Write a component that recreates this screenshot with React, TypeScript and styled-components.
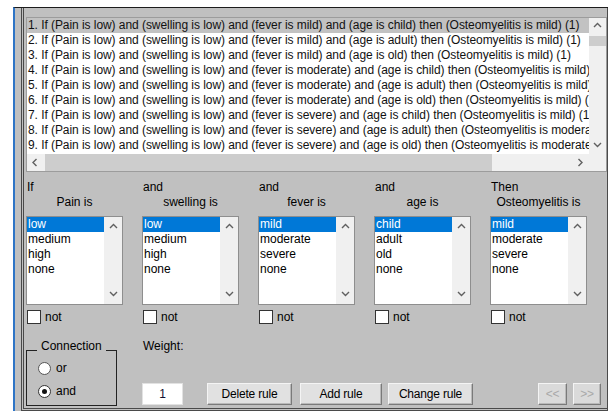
import React from "react";
import styled, { createGlobalStyle } from "styled-components";

const GlobalStyle = createGlobalStyle`
  html, body {
    margin: 0;
    padding: 0;
    background: #ffffff;
  }
  body {
    font-family: "Liberation Sans", Arial, sans-serif;
    font-size: 12px;
    color: #000;
  }
`;

const Window = styled.div`
  box-sizing: border-box;
  margin: 7px 0 0 13px;
  width: 595px;
  height: 404px;
  border-left: 2px solid #2f75c6;
  border-top: 1px solid #1c1c1c;
  background: #c0c0c0;
  padding-left: 6px;
  display: flex;
`;

const Panel = styled.div`
  flex: 1;
  display: flex;
  flex-direction: column;
  border-left: 1px solid #4a4a4a;
  border-right: 1px solid #4a4a4a;
  border-bottom: 1px solid #4a4a4a;
  box-shadow: inset 1px -1px 0 #c0c0c0, inset 2px -2px 0 #4a4a4a;
  padding: 9px 0 0 4px;
`;

/* ---------- rule list ---------- */

const RuleBox = styled.div`
  box-sizing: border-box;
  width: 581px;
  height: 155px;
  border: 1px solid #9c9c9c;
  background: #fff;
  display: grid;
  grid-template-columns: 1fr 17px;
  grid-template-rows: 1fr 17px;
`;

const RuleRows = styled.div`
  overflow: hidden;
`;

const RuleRow = styled.div<{ $selected?: boolean }>`
  height: 15px;
  line-height: 15px;
  padding-left: 1px;
  letter-spacing: -0.06px;
  white-space: nowrap;
  color: #111;
  background: ${({ $selected }) => ($selected ? "#c2c2c2" : "transparent")};
`;

const VScroll = styled.div`
  background: #f0f0f0;
  display: grid;
  grid-template-rows: 17px 1fr 17px;
`;

const HScroll = styled.div`
  background: #f0f0f0;
  display: grid;
  grid-template-columns: 17px 1fr 17px;
`;

const ScrollCorner = styled.div`
  background: #f0f0f0;
`;

const ArrowCell = styled.div`
  display: flex;
  align-items: center;
  justify-content: center;
`;

const VTrack = styled.div`
  padding-top: 1px;
`;

const VThumb = styled.div`
  height: 10px;
  background: #cdcdcd;
`;

const HTrack = styled.div`
  display: flex;
  padding-left: 1px;
`;

const HThumb = styled.div`
  width: 447px;
  background: #cdcdcd;
`;

type Dir = "up" | "down" | "left" | "right";

const arrowPoints: Record<Dir, string> = {
  up: "1,5 4.5,1.5 8,5",
  down: "1,2 4.5,5.5 8,2",
  left: "5.5,1 2,4.5 5.5,8",
  right: "2.5,1 6,4.5 2.5,8",
};

function Arrow({ dir }: { dir: Dir }) {
  return (
    <svg width="9" height="9" viewBox="0 0 9 9">
      <polyline
        points={arrowPoints[dir]}
        fill="none"
        stroke="#606060"
        strokeWidth="1.4"
      />
    </svg>
  );
}

/* ---------- antecedent / consequent selectors ---------- */

const SelectorRow = styled.div`
  display: grid;
  grid-template-columns: repeat(5, 97px);
  column-gap: 19px;
  margin-top: 8px;
`;

const Selector = styled.div`
  display: flex;
  flex-direction: column;
`;

const Caption = styled.div<{ $center?: boolean }>`
  line-height: 15px;
  height: 15px;
  white-space: nowrap;
  padding-left: ${({ $center }) => ($center ? "0" : "1px")};
  text-align: ${({ $center }) => ($center ? "center" : "left")};
`;

const ListBox = styled.div`
  box-sizing: border-box;
  margin-top: 6px;
  height: 89px;
  border: 1px solid #8e8e8e;
  background: #fff;
  display: grid;
  grid-template-columns: 1fr 18px;
`;

const Options = styled.div`
  padding-top: 0;
`;

const Option = styled.div<{ $selected?: boolean }>`
  height: 15px;
  line-height: 15px;
  padding-left: 1px;
  background: ${({ $selected }) => ($selected ? "#0078d7" : "transparent")};
  color: ${({ $selected }) => ($selected ? "#fff" : "#000")};
`;

const ListScroll = styled.div`
  background: #f0f0f0;
  display: flex;
  flex-direction: column;
  justify-content: space-between;
  align-items: center;
  padding: 6px 0 5px;
`;

const CheckLine = styled.label`
  display: flex;
  align-items: center;
  gap: 4px;
  margin-top: 5px;
  padding-left: 1px;
  height: 14px;
`;

const CheckBox = styled.span`
  box-sizing: border-box;
  width: 14px;
  height: 14px;
  background: #fff;
  border: 1px solid #333;
`;

/* ---------- bottom controls ---------- */

const Footer = styled.div`
  display: flex;
  margin-top: 15px;
`;

const GroupBox = styled.fieldset`
  box-sizing: border-box;
  width: 91px;
  height: 67px;
  margin: 0;
  padding: 0 0 0 10px;
  border: 1px solid #222;
  min-width: 0;
`;

const GroupTitle = styled.legend`
  padding: 0 4px 8px;
  line-height: 15px;
`;

const RadioLine = styled.label`
  display: flex;
  align-items: center;
  gap: 5px;
  height: 16px;
  margin: 0 0 7px 1px;
  &:first-of-type {
    margin-top: -2px;
  }
`;

const RadioDot = styled.span<{ $checked?: boolean }>`
  box-sizing: border-box;
  width: 13px;
  height: 13px;
  border-radius: 50%;
  border: 1px solid ${({ $checked }) => ($checked ? "#333" : "#555")};
  background: #fff;
  display: flex;
  align-items: center;
  justify-content: center;
  &::after {
    content: "";
    width: 5px;
    height: 5px;
    border-radius: 50%;
    background: ${({ $checked }) => ($checked ? "#111" : "transparent")};
  }
`;

const WeightArea = styled.div`
  flex: 1;
  margin-left: 25px;
  padding-right: 6px;
  display: flex;
  flex-direction: column;
  justify-content: space-between;
  height: 67px;
`;

const ActionRow = styled.div`
  display: flex;
  align-items: flex-start;
  margin-bottom: 1px;
`;

const WeightInput = styled.div`
  box-sizing: border-box;
  width: 41px;
  height: 22px;
  line-height: 20px;
  background: #fff;
  border: 1px solid #e2e2e2;
  text-align: center;
  color: #101030;
`;

const Button = styled.button<{ $w: number; $gap?: number }>`
  box-sizing: border-box;
  width: ${({ $w }) => $w}px;
  height: 22px;
  margin-left: ${({ $gap }) => $gap ?? 0}px;
  padding: 0;
  font: inherit;
  letter-spacing: -0.2px;
  color: #000;
  background: #e1e1e1;
  border: 1px solid;
  border-color: #f4f4f4 #7a7a7a #7a7a7a #f4f4f4;
  box-shadow: inset -1px -1px 0 #b9b9b9;
  &:disabled {
    color: #a9a9a9;
    background: #dadada;
  }
`;

const NavGroup = styled.div`
  margin-left: auto;
  display: flex;
  gap: 6px;
`;

const rules = [
  ["mild", "child", "mild"],
  ["mild", "adult", "mild"],
  ["mild", "old", "mild"],
  ["moderate", "child", "mild"],
  ["moderate", "adult", "mild"],
  ["moderate", "old", "mild"],
  ["severe", "child", "mild"],
  ["severe", "adult", "moderate"],
  ["severe", "old", "moderate"],
];

const selectors = [
  { lead: "If", title: "Pain is", options: ["low", "medium", "high", "none"] },
  { lead: "and", title: "swelling is", options: ["low", "medium", "high", "none"] },
  { lead: "and", title: "fever is", options: ["mild", "moderate", "severe", "none"] },
  { lead: "and", title: "age is", options: ["child", "adult", "old", "none"] },
  { lead: "Then", title: "Osteomyelitis is", options: ["mild", "moderate", "severe", "none"] },
];

function App() {
  return (
    <>
      <GlobalStyle />
      <Window>
        <Panel>
          <RuleBox>
            <RuleRows>
              {rules.map(([fever, age, out], i) => (
                <RuleRow key={i} $selected={i === 0}>
                  {`${i + 1}. If (Pain is low) and (swelling is low) and (fever is ${fever}) and (age is ${age}) then (Osteomyelitis is ${out}) (1)`}
                </RuleRow>
              ))}
            </RuleRows>
            <VScroll>
              <ArrowCell>
                <Arrow dir="up" />
              </ArrowCell>
              <VTrack>
                <VThumb />
              </VTrack>
              <ArrowCell>
                <Arrow dir="down" />
              </ArrowCell>
            </VScroll>
            <HScroll>
              <ArrowCell>
                <Arrow dir="left" />
              </ArrowCell>
              <HTrack>
                <HThumb />
              </HTrack>
              <ArrowCell>
                <Arrow dir="right" />
              </ArrowCell>
            </HScroll>
            <ScrollCorner />
          </RuleBox>

          <SelectorRow>
            {selectors.map((s) => (
              <Selector key={s.title}>
                <Caption>{s.lead}</Caption>
                <Caption $center>{s.title}</Caption>
                <ListBox>
                  <Options>
                    {s.options.map((o, i) => (
                      <Option key={o} $selected={i === 0}>
                        {o}
                      </Option>
                    ))}
                  </Options>
                  <ListScroll>
                    <Arrow dir="up" />
                    <Arrow dir="down" />
                  </ListScroll>
                </ListBox>
                <CheckLine>
                  <CheckBox />
                  not
                </CheckLine>
              </Selector>
            ))}
          </SelectorRow>

          <Footer>
            <GroupBox>
              <GroupTitle>Connection</GroupTitle>
              <RadioLine>
                <RadioDot />
                or
              </RadioLine>
              <RadioLine>
                <RadioDot $checked />
                and
              </RadioLine>
            </GroupBox>
            <WeightArea>
              <Caption>Weight:</Caption>
              <ActionRow>
                <WeightInput>1</WeightInput>
                <Button $w={85} $gap={24}>Delete rule</Button>
                <Button $w={82} $gap={8}>Add rule</Button>
                <Button $w={85} $gap={6}>Change rule</Button>
                <NavGroup>
                  <Button $w={29} disabled>
                    &lt;&lt;
                  </Button>
                  <Button $w={28} disabled>
                    &gt;&gt;
                  </Button>
                </NavGroup>
              </ActionRow>
            </WeightArea>
          </Footer>
        </Panel>
      </Window>
    </>
  );
}

export default App;
